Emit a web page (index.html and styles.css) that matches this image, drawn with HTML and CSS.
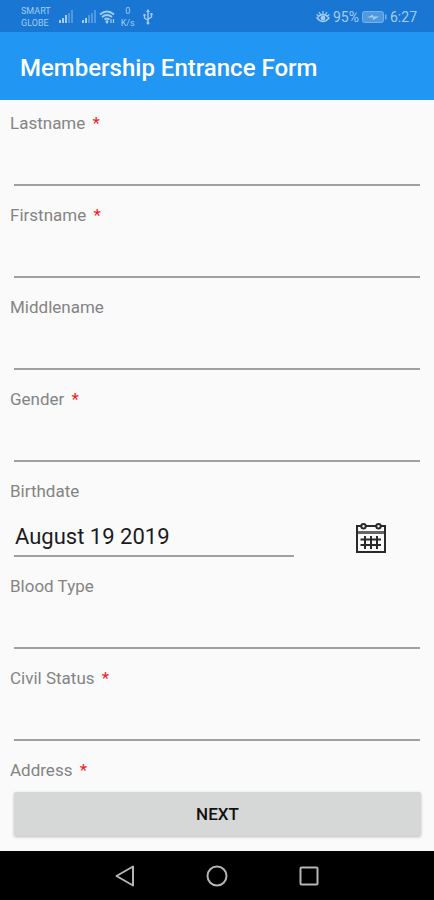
FILE: index.html
```html
<!DOCTYPE html>
<html lang="en">
<head>
    <title>Membership Entrance Form</title>
    <meta charset="UTF-8">
    <meta name="viewport" content="width=device-width, initial-scale=1">
    <link rel="stylesheet" href="styles.css">
</head>
<body>
    <div class="status-bar">
        <div class="status-group">
            <div class="carriers">
                <span>SMART</span>
                <span>GLOBE</span>
            </div>
            <svg width="15" height="14" viewBox="0 0 15 14">
                <path d="M0 10h2v3H0zM3 8h2v5H3zM6 5h2v8H6z" fill="currentColor"/>
                <path d="M9 3h2v10H9zM12 0h2v13h-2z" fill="currentColor" opacity="0.4"/>
            </svg>
            <div class="network">
                <svg width="15" height="14" viewBox="0 0 15 14">
                    <path d="M0 10h2v3H0zM3 8h2v5H3z" fill="currentColor"/>
                    <path d="M6 5h2v8H6zM9 3h2v10H9zM12 0h2v13h-2z" fill="currentColor" opacity="0.4"/>
                </svg>
                <svg width="17" height="14" viewBox="0 0 17 14" fill="none" stroke="currentColor" stroke-width="1.8">
                    <path d="M1 4.5q7-6 14 0M3 7q5-4 10 0M5.5 9.5q2.5-2 5 0"/>
                    <path d="M8 10.5l1 1.2-1 1.3-1-1.3zM12 9v4M14.5 9v4" stroke-width="1.2"/>
                </svg>
                <div class="speed">
                    <span>0</span>
                    <span>K/s</span>
                </div>
                <svg class="usb" width="10" height="16" viewBox="0 0 10 16" fill="none" stroke="currentColor" stroke-width="1.4">
                    <path d="M5 2v12M1.5 6v3L5 11.5M8.5 5v3L5 10.5"/>
                    <path d="M5 0l2 3H3zM0.5 5h2v2h-2zM7.5 4h2v2h-2z" fill="currentColor" stroke="none"/>
                    <circle cx="5" cy="14" r="1.5" fill="currentColor" stroke="none"/>
                </svg>
            </div>
        </div>
        <div class="status-group right">
            <svg width="14" height="14" viewBox="0 0 14 14" fill="none" stroke="currentColor" stroke-width="1.3">
                <path d="M1 8q6-7 12 0q-6 7-12 0zM7 1v3M3 2l1.5 2.5M11 2L9.5 4.5M0.5 4.5L3 6M13.5 4.5L11 6"/>
                <circle cx="7" cy="8" r="1.8" fill="currentColor"/>
            </svg>
            <span>95%</span>
            <svg width="25" height="12" viewBox="0 0 25 12">
                <rect x="0.5" y="0.5" width="21" height="11" rx="2" fill="currentColor" fill-opacity="0.4" stroke="currentColor" stroke-opacity="0.6"/>
                <path d="M23 3.5h1.5v5H23z" fill="currentColor" opacity="0.7"/>
                <path d="M5 6.500l6-3v2h6l-6 3.500v-2.500z" fill="currentColor"/>
            </svg>
            <span>6:27</span>
        </div>
    </div>

    <header class="app-bar">
        <h1>Membership Entrance Form</h1>
    </header>

    <form class="member-form" method="post">
        <div class="fields">
            <div class="field">
                <label for="lastname">Lastname <span class="required">*</span></label>
                <input type="text" id="lastname" name="lastname" required>
            </div>
            <div class="field">
                <label for="firstname">Firstname <span class="required">*</span></label>
                <input type="text" id="firstname" name="firstname" required>
            </div>
            <div class="field">
                <label for="middlename">Middlename</label>
                <input type="text" id="middlename" name="middlename">
            </div>
            <div class="field">
                <label for="gender">Gender <span class="required">*</span></label>
                <input type="text" id="gender" name="gender" required>
            </div>
            <div class="field">
                <label for="birthdate">Birthdate</label>
                <div class="date-row">
                    <input type="text" id="birthdate" name="birthdate" value="August 19 2019">
                    <button type="button" class="calendar-btn" aria-label="Pick a date">
                        <svg width="30" height="30" viewBox="0 0 30 30" fill="none" stroke="#2a2a2a" stroke-width="2">
                            <path d="M5 3H1v26h28V3h-4M10 3h10"/>
                            <path d="M2 9.5h26" stroke="#666" stroke-width="3"/>
                            <circle cx="7.5" cy="3.2" r="2.2"/>
                            <circle cx="22.5" cy="3.2" r="2.2"/>
                            <path d="M4.500 16.500h20.500M4.500 22h20.500M9 13v13M15 13v13M21 13v13"/>
                        </svg>
                    </button>
                </div>
            </div>
            <div class="field">
                <label for="blood_type">Blood Type</label>
                <input type="text" id="blood_type" name="blood_type">
            </div>
            <div class="field">
                <label for="civil_status">Civil Status <span class="required">*</span></label>
                <input type="text" id="civil_status" name="civil_status" required>
            </div>
            <div class="field">
                <label for="address">Address <span class="required">*</span></label>
                <input type="text" id="address" name="address" required>
            </div>
        </div>

        <div class="actions">
            <button type="submit" class="next-btn">NEXT</button>
        </div>
    </form>

    <nav class="nav-bar">
        <button type="button" aria-label="Back">
            <svg width="22" height="22" viewBox="0 0 22 22">
                <path d="M19 1.500v19L2.500 11z"/>
            </svg>
        </button>
        <button type="button" aria-label="Home">
            <svg width="22" height="22" viewBox="0 0 22 22">
                <circle cx="11" cy="11" r="9.500"/>
            </svg>
        </button>
        <button type="button" aria-label="Recent apps">
            <svg width="22" height="22" viewBox="0 0 22 22">
                <rect x="2.500" y="2.500" width="17" height="17" rx="1"/>
            </svg>
        </button>
    </nav>
</body>
</html>
```

FILE: styles.css
```css
:root {
    --primary: #2196f3;
    --primary-dark: #1976d2;
    --background: #fafafa;
    --label: #848484;
    --line: #a0a0a0;
}

* {
    box-sizing: border-box;
}

body {
    font-family: Roboto, sans-serif;
    background: var(--background);
    margin: 0;
    height: 100vh;
    display: flex;
    flex-direction: column;
}

button {
    font-family: inherit;
    border: none;
    padding: 0;
    cursor: pointer;
}

svg {
    display: block;
}

/* Status bar */
.status-bar {
    flex: none;
    display: flex;
    justify-content: space-between;
    height: 32px;
    padding: 2px 17px 0 21px;
    background: var(--primary-dark);
    color: #a3cdf3;
    font-size: 14px;
}

.status-group {
    display: flex;
    align-items: center;
    gap: 8px;
}

.status-group.right {
    gap: 3px;
}

.carriers,
.speed {
    display: flex;
    flex-direction: column;
    font-size: 9px;
    line-height: 12px;
}

.speed {
    align-items: center;
    margin-left: 3px;
}

.network {
    display: flex;
    align-items: center;
    gap: 2px;
}

.usb {
    margin-left: 6px;
}

/* Title */
.app-bar {
    flex: none;
    display: flex;
    align-items: center;
    height: 68px;
    padding: 4px 20px 0;
    background: var(--primary);
}

.app-bar h1 {
    margin: 0;
    color: white;
    font-size: 24px;
    font-weight: 500;
}

/* Form */
.member-form {
    flex: 1;
    min-height: 0;
    display: flex;
    flex-direction: column;
}

.fields {
    flex: 1;
    min-height: 0;
    padding: 11px 14px 0;
    overflow-y: auto;
    scrollbar-width: none;
}

.field {
    margin-bottom: 17px;
}

.field label {
    display: block;
    margin-left: -4px;
    color: var(--label);
    font-size: 17px;
    line-height: 24px;
}

.required {
    margin-left: 3px;
    color: #f02020;
}

.field input {
    display: block;
    width: 100%;
    height: 51px;
    padding: 6px 1px 0;
    border: none;
    border-bottom: 2px solid var(--line);
    border-radius: 0;
    background: transparent;
    color: #1c1c1c;
    font-family: inherit;
    font-size: 22px;
}

.field input:focus {
    outline: none;
    border-color: var(--primary);
}

.date-row {
    display: grid;
    grid-template-columns: 20fr 7fr;
    gap: 28px;
}

.date-row input {
    height: 54px;
    padding-top: 15px;
}

.calendar-btn {
    display: grid;
    place-items: center;
    padding-top: 16px;
    background: none;
}

.actions {
    flex: none;
    padding: 7px 13px 15px 14px;
}

.next-btn {
    display: block;
    width: 100%;
    height: 44px;
    border-radius: 2px;
    background: #d6d8d7;
    box-shadow: 0 1px 3px rgba(0, 0, 0, 0.25);
    color: #111;
    font-size: 17px;
    font-weight: 500;
}

/* Navigation bar */
.nav-bar {
    flex: none;
    display: flex;
    justify-content: center;
    gap: 70px;
    height: 49px;
    background: black;
}

.nav-bar button {
    background: none;
}

.nav-bar svg {
    fill: none;
    stroke: #b5b5b5;
    stroke-width: 2;
    stroke-linejoin: round;
}
```
